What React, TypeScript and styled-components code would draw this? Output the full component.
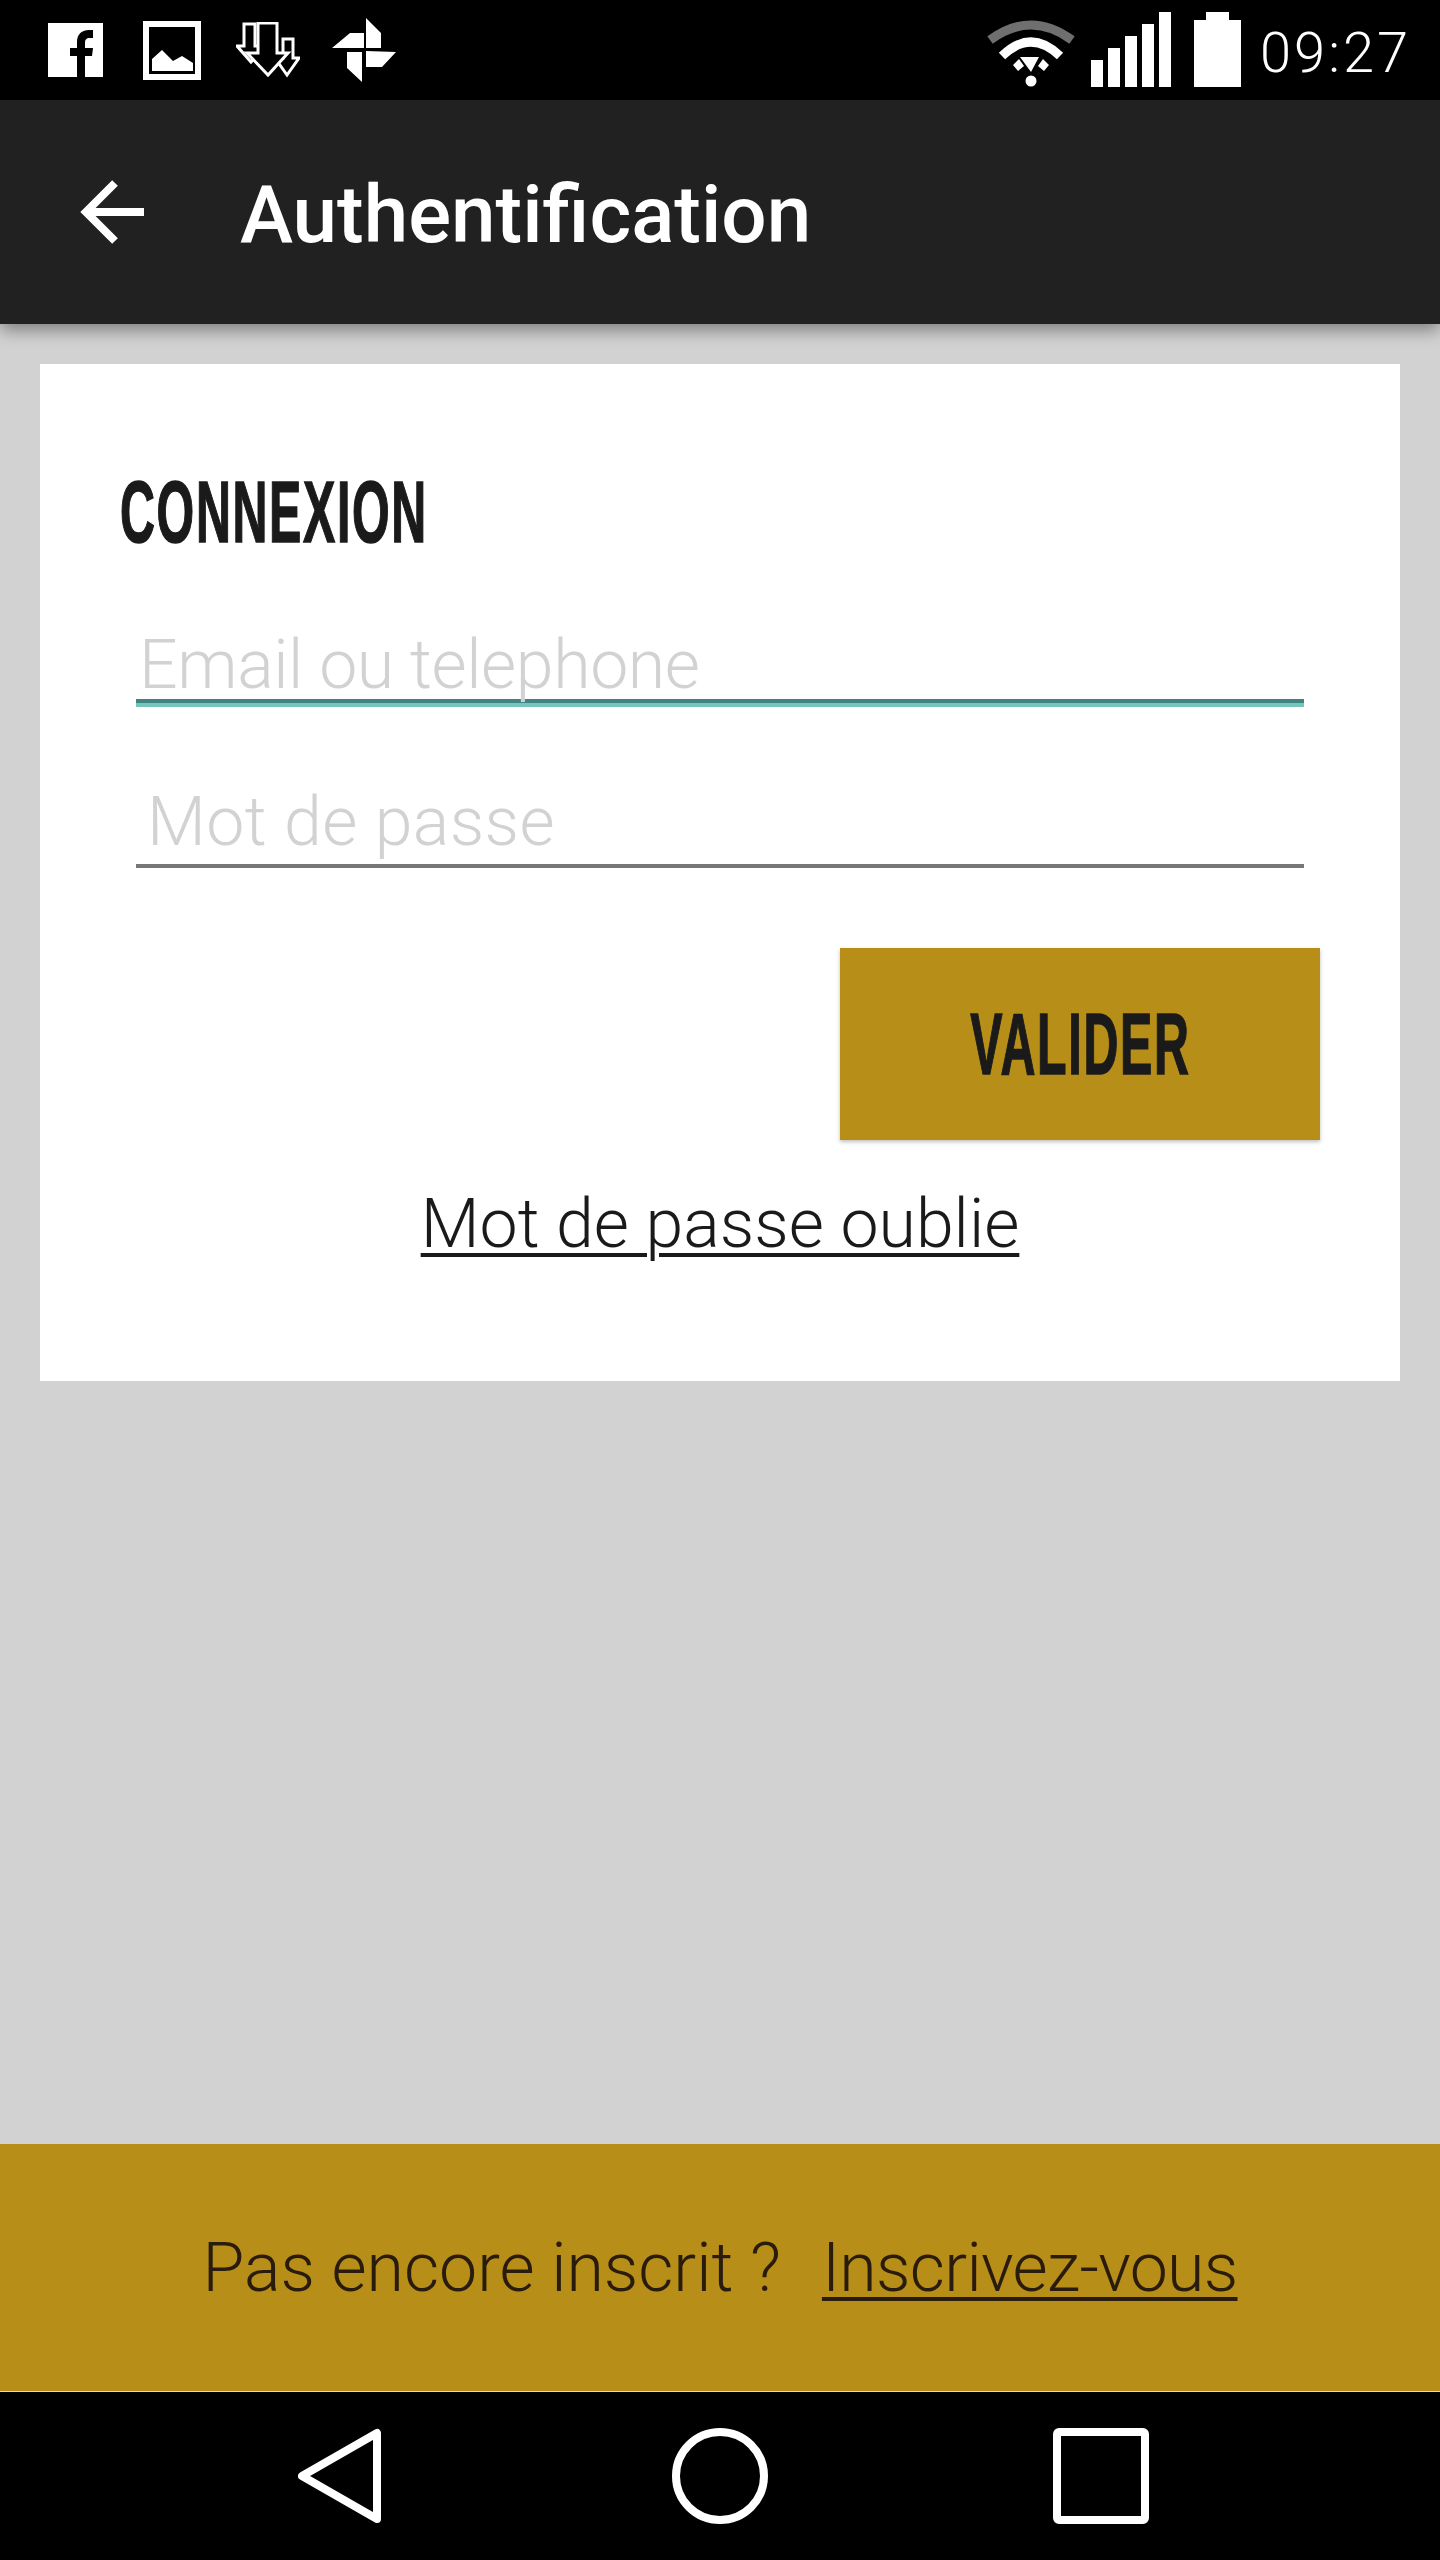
import React from "react";
import styled, { createGlobalStyle } from "styled-components";

const GlobalStyle = createGlobalStyle`
  html, body {
    margin: 0;
    padding: 0;
    background: #d2d2d2;
  }
`;

const Page = styled.div`
  width: 1440px;
  height: 2560px;
  display: flex;
  flex-direction: column;
  background: #d2d2d2;
  overflow: hidden;
`;

const StatusBar = styled.div`
  height: 100px;
  flex: none;
  background: #000;
  display: flex;
  align-items: center;
  justify-content: space-between;
  padding: 0 30px 0 48px;
`;

const StatusGroup = styled.div<{ $gap: number }>`
  display: flex;
  align-items: center;
  gap: ${(p) => p.$gap}px;
`;

const Clock = styled.span`
  width: 150px;
  margin-left: 3px;
  padding-top: 6px;
  font-family: Roboto, "Liberation Sans", sans-serif;
  font-weight: 300;
  font-size: 56px;
  line-height: 94px;
  letter-spacing: 3px;
  color: #fff;
  white-space: nowrap;
`;

const AppBar = styled.header`
  height: 224px;
  flex: none;
  background: #212121;
  display: flex;
  align-items: center;
  gap: 96px;
  padding-left: 80px;
  box-shadow: 0 6px 16px rgba(0, 0, 0, 0.4);
  position: relative;
  z-index: 1;
`;

const Title = styled.h1`
  margin: 0;
  padding-top: 6px;
  font-family: Roboto, "Liberation Sans", sans-serif;
  font-weight: 500;
  font-size: 80px;
  line-height: 96px;
  color: #fff;
`;

const Card = styled.main`
  flex: none;
  height: 1017px;
  box-sizing: border-box;
  margin: 40px 40px 0;
  background: #fff;
  padding: 98px 80px 0;
  display: flex;
  flex-direction: column;
`;

const Heading = styled.h2`
  margin: 0 0 4px;
  font-family: "Liberation Sans Narrow", "Liberation Sans", sans-serif;
  font-weight: 700;
  font-size: 88px;
  line-height: 100px;
  letter-spacing: 3px;
  color: #1a1a1a;
  white-space: nowrap;
  transform: scaleX(0.55);
  transform-origin: left center;
  -webkit-text-stroke: 1.5px #1a1a1a;
`;

const Field = styled.div<{ $active?: boolean; $indent: number }>`
  margin: ${(p) => (p.$active ? "22px" : "53px")} 16px 0;
  height: ${(p) => (p.$active ? "115px" : "104px")};
  padding-left: ${(p) => p.$indent}px;
  display: flex;
  align-items: flex-end;
  border-bottom: 4px solid ${(p) => (p.$active ? "#76c4bc" : "#777")};
  box-shadow: ${(p) => (p.$active ? "inset 0 -4px 0 #3f8480" : "none")};
`;

const Placeholder = styled.span<{ $lift: number; $tracking: number }>`
  margin-bottom: ${(p) => p.$lift}px;
  font-family: Roboto, "Liberation Sans", sans-serif;
  font-weight: 300;
  font-size: 68px;
  line-height: 80px;
  letter-spacing: ${(p) => p.$tracking}px;
  color: #d2d2d2;
  white-space: nowrap;
`;

const SubmitRow = styled.div`
  display: flex;
  justify-content: flex-end;
  margin-top: 80px;
`;

const SubmitButton = styled.button`
  width: 480px;
  height: 192px;
  border: 0;
  padding: 0;
  background: #b78e18;
  box-shadow: 0 2px 4px rgba(0, 0, 0, 0.25);
  display: flex;
  align-items: center;
  justify-content: center;
`;

const SubmitLabel = styled.span`
  font-family: "Liberation Sans Narrow", "Liberation Sans", sans-serif;
  font-weight: 700;
  font-size: 88px;
  line-height: 100px;
  letter-spacing: 3px;
  color: #1a1a1a;
  transform: scaleX(0.55);
  -webkit-text-stroke: 1.5px #1a1a1a;
`;

const Forgot = styled.a`
  align-self: center;
  margin-top: 44px;
  font-family: Roboto, "Liberation Sans", sans-serif;
  font-weight: 300;
  font-size: 68px;
  line-height: 80px;
  color: #1a1a1a;
  text-decoration: underline;
  text-decoration-thickness: 4px;
  text-underline-offset: 6px;
`;

const Spacer = styled.div`
  flex: 1;
`;

const SignupBand = styled.div`
  height: 248px;
  flex: none;
  box-sizing: border-box;
  background: #b78e18;
  border-bottom: 1px solid #e6d9b8;
  display: flex;
  align-items: center;
  justify-content: center;
  gap: 41px;
  font-family: Roboto, "Liberation Sans", sans-serif;
  font-weight: 300;
  font-size: 68px;
  color: #2a1c0c;
`;

const SignupLink = styled.a`
  letter-spacing: -0.7px;
  text-decoration: underline;
  text-decoration-thickness: 4px;
  text-underline-offset: 6px;
`;

const NavBar = styled.nav`
  height: 168px;
  flex: none;
  background: #000;
  display: flex;
  align-items: center;
  gap: 285px;
  padding-left: 298px;
`;

const FacebookIcon = () => (
  <svg width="63" height="54" viewBox="0 0 63 54">
    <path
      fill="#fff"
      fillRule="evenodd"
      d="M0 0H55V54H0Z M29 54V33H22V25H29V19C29 11 34 7 41 7H45V15H42C38 15 37 17 37 20V25H45L44 33H37V54Z"
    />
  </svg>
);

const GalleryIcon = () => (
  <svg width="61" height="59" viewBox="0 0 61 59">
    <rect x="3" y="3" width="52" height="53" fill="none" stroke="#fff" strokeWidth="6" />
    <path fill="#fff" d="M9 50V38L19 29L30 40L39 35L50 42V50Z" />
  </svg>
);

const DownloadsIcon = () => (
  <svg width="64" height="56" viewBox="0 0 64 56">
    <g fill="#000" stroke="#fff" strokeWidth="3">
      <path d="M8 2H19V24H30L15 40L1 24H8Z" />
      <path d="M47 17H57V36H63L51 53L39 36H47Z" />
      <path d="M22 1H41V31H52L32 53L11 31H22Z" />
    </g>
  </svg>
);

const PinwheelIcon = () => (
  <svg width="64" height="66" viewBox="0 0 64 66">
    <path
      fill="#fff"
      d="M34 1L49 16V31H34Z M0 31L18 16H32V31Z M34 34L64 35L50 50H34Z M15 35H30V65L15 51Z"
    />
  </svg>
);

const WifiIcon = () => (
  <svg width="88" height="100" viewBox="0 0 88 100">
    <path d="M3 40Q44 10 85 40" fill="none" stroke="#6f6f6f" strokeWidth="9" />
    <path d="M15 56Q44 28 73 56" fill="none" stroke="#fff" strokeWidth="9" />
    <path fill="#fff" d="M33 57H52L44 72Z M26 65L32 59L37 66L31 71Z M62 65L56 59L51 66L57 71Z" />
    <circle cx="44" cy="81" r="5.5" fill="#fff" />
  </svg>
);

const SignalIcon = () => (
  <svg width="87" height="100" viewBox="0 0 87 100">
    <path fill="#fff" d="M0 60H12V87H0Z M17 48H29V87H17Z M34 36H46V87H34Z M51 24H63V87H51Z M68 12H80V87H68Z" />
  </svg>
);

const BatteryIcon = () => (
  <svg width="47" height="100" viewBox="0 0 47 100">
    <path fill="#fff" d="M12 12H35V20H47V87H0V20H12Z" />
  </svg>
);

const BackArrow = () => (
  <svg width="64" height="64" viewBox="0 0 64 64">
    <path d="M64 32H6M35 3L6 32L35 61" fill="none" stroke="#fff" strokeWidth="8" />
  </svg>
);

const NavBack = () => (
  <svg width="89" height="96" viewBox="0 0 89 96">
    <path d="M79 5V91L4 48Z" fill="none" stroke="#fff" strokeWidth="8" strokeLinejoin="round" />
  </svg>
);

const NavHome = () => (
  <svg width="96" height="96" viewBox="0 0 96 96">
    <circle cx="48" cy="48" r="44" fill="none" stroke="#fff" strokeWidth="8" />
  </svg>
);

const NavRecents = () => (
  <svg width="96" height="96" viewBox="0 0 96 96">
    <rect x="4" y="4" width="88" height="88" rx="2" fill="none" stroke="#fff" strokeWidth="8" />
  </svg>
);

const App: React.FC = () => {
  return (
    <Page>
      <GlobalStyle />
      <StatusBar>
        <StatusGroup $gap={32}>
          <FacebookIcon />
          <GalleryIcon />
          <DownloadsIcon />
          <PinwheelIcon />
        </StatusGroup>
        <StatusGroup $gap={16}>
          <WifiIcon />
          <SignalIcon />
          <BatteryIcon />
          <Clock>09:27</Clock>
        </StatusGroup>
      </StatusBar>
      <AppBar>
        <BackArrow />
        <Title>Authentification</Title>
      </AppBar>
      <Card>
        <Heading>CONNEXION</Heading>
        <Field $active $indent={3}>
          <Placeholder $lift={-2} $tracking={-0.4}>Email ou telephone</Placeholder>
        </Field>
        <Field $indent={11}>
          <Placeholder $lift={2} $tracking={0.4}>Mot de passe</Placeholder>
        </Field>
        <SubmitRow>
          <SubmitButton>
            <SubmitLabel>VALIDER</SubmitLabel>
          </SubmitButton>
        </SubmitRow>
        <Forgot>Mot de passe oublie</Forgot>
      </Card>
      <Spacer />
      <SignupBand>
        <span>Pas encore inscrit ?</span>
        <SignupLink>Inscrivez-vous</SignupLink>
      </SignupBand>
      <NavBar>
        <NavBack />
        <NavHome />
        <NavRecents />
      </NavBar>
    </Page>
  );
};

export default App;
